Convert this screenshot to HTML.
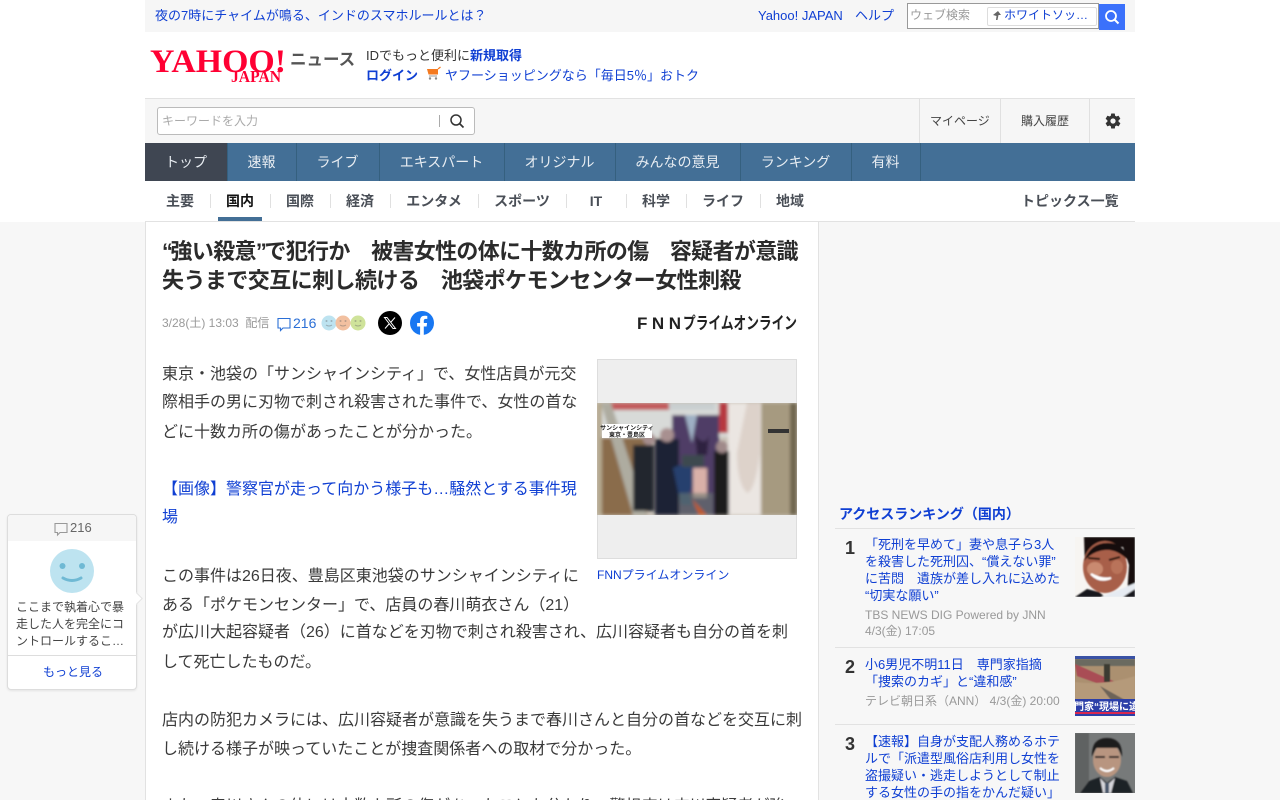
<!DOCTYPE html>
<html lang="ja"><head><meta charset="utf-8"><title>Yahoo!ニュース</title>
<style>
*{box-sizing:border-box}
html,body{margin:0;padding:0;width:1280px;height:800px;overflow:hidden;background:#fff}
body{font-family:"Liberation Sans","Noto Sans CJK JP",sans-serif;color:#333;position:relative}
.a{position:absolute;white-space:nowrap}
a,.l{color:#0f3fd3;text-decoration:none}
.hdr{left:145px;width:990px}
.nav{font-size:14px;color:#e8edf2;text-align:center;line-height:38px;top:143px;height:38px}
.ns{position:absolute;top:143px;width:1px;height:38px;background:#35607f}
.sub{font-size:14px;font-weight:bold;color:#4a4f57;top:192px;line-height:18px;text-align:center}
.sv{position:absolute;top:194px;width:1px;height:14px;background:#e0e0e0}
.p{font-size:16px;line-height:29px;color:#3a3a3a;left:162px}
.r{font-size:13px;line-height:17px;color:#0f3fd3;left:865px}
.m{font-size:12px;line-height:16px;color:#999;left:865px}
.hl{left:835px;width:300px;height:1px;background:#e2e2e2}
.t{left:162px;font-size:22px;line-height:32px;font-weight:bold;color:#2b2b2b;letter-spacing:-.56px}
.q{letter-spacing:-2.500px}
</style></head><body>
<div class="a" style="left:0;top:222px;width:1280px;height:578px;background:#f7f7f7"></div>
<div class="a hdr" style="top:0;height:32px;background:#f6f6f6"></div>
<div class="a l" style="left:155px;top:7px;font-size:13px;line-height:18px">夜の7時にチャイムが鳴る、インドのスマホルールとは？</div>
<div class="a l" style="left:758px;top:7px;font-size:13px;line-height:18px">Yahoo! JAPAN</div>
<div class="a l" style="left:855px;top:7px;font-size:13px;line-height:18px">ヘルプ</div>
<div class="a" style="left:907px;top:3px;width:192px;height:26px;background:#fff;border:1px solid #999"></div>
<div class="a" style="left:910px;top:7px;font-size:12px;line-height:17px;color:#999">ウェブ検索</div>
<div class="a" style="left:987px;top:7px;width:110px;height:19px;border:1px solid #ddd;border-radius:2px;background:#fff"></div>
<svg class="a" style="left:992px;top:10px" width="10" height="12" viewBox="0 0 10 12"><path d="M6 1L9 5H6.500L5.500 10H4L4.500 6L1 5z" fill="#666"/></svg>
<div class="a l" style="left:1004px;top:7px;font-size:12px;line-height:17px">ホワイトソッ…</div>
<div class="a" style="left:1099px;top:4px;width:26px;height:26px;background:#3b71fb"></div>
<svg class="a" style="left:1104px;top:9px" width="16" height="16" viewBox="0 0 16 16"><circle cx="7" cy="7" r="5" fill="none" stroke="#fff" stroke-width="1.800"/><path d="M10.500 10.500L14.500 14.500" stroke="#fff" stroke-width="2"/></svg>

<svg class="a" style="left:145px;top:40px" width="150" height="46" viewBox="0 0 150 46" font-family="'Liberation Serif',serif" font-weight="bold" fill="#ff0033"><text x="5" y="32" font-size="33" textLength="136" lengthAdjust="spacingAndGlyphs">YAHOO!</text><text x="86" y="42" font-size="17" textLength="50" lengthAdjust="spacingAndGlyphs">JAPAN</text></svg>
<div class="a" style="left:290px;top:48px;font-size:16.500px;line-height:24px;font-weight:bold;color:#555">ニュース</div>
<div class="a" style="left:366px;top:47px;font-size:13px;line-height:18px;color:#333">IDでもっと便利に<b class="l">新規取得</b></div>
<div class="a l" style="left:366px;top:67px;font-size:13px;line-height:18px;font-weight:bold">ログイン</div>
<svg class="a" style="left:426px;top:66px" width="16" height="15" viewBox="0 0 16 15"><path d="M1 3H12V8.500H2.500z" fill="#f47a20"/><path d="M12 3L14.500 1" stroke="#f47a20" stroke-width="1.200"/><path d="M3 10H11" stroke="#999"/><circle cx="4" cy="12.500" r="1.200" fill="#888"/><circle cx="10" cy="12.500" r="1.200" fill="#888"/></svg>
<div class="a l" style="left:445px;top:67px;font-size:13px;line-height:18px">ヤフーショッピングなら「毎日5％」おトク</div>

<div class="a hdr" style="top:98px;height:45px;background:#f6f6f6;border-top:1px solid #e2e2e2"></div>
<div class="a" style="left:157px;top:107px;width:318px;height:28px;background:#fff;border:1px solid #bbb;border-radius:3px"></div>
<div class="a" style="left:162px;top:112px;font-size:12px;line-height:18px;color:#aaa">キーワードを入力</div>
<div class="a" style="left:439px;top:115px;width:1px;height:12px;background:#aaa"></div>
<svg class="a" style="left:449px;top:113px" width="16" height="16" viewBox="0 0 16 16"><circle cx="7" cy="7" r="5" fill="none" stroke="#333" stroke-width="1.500"/><path d="M10.500 10.500L14.500 14.500" stroke="#333" stroke-width="1.700"/></svg>
<div class="a" style="left:919px;top:99px;width:1px;height:44px;background:#e0e0e0"></div>
<div class="a" style="left:1000px;top:99px;width:1px;height:44px;background:#e0e0e0"></div>
<div class="a" style="left:1089px;top:99px;width:1px;height:44px;background:#e0e0e0"></div>
<div class="a" style="left:930px;top:112px;font-size:12px;line-height:18px;color:#444">マイページ</div>
<div class="a" style="left:1021px;top:112px;font-size:12px;line-height:18px;color:#444">購入履歴</div>
<svg class="a" style="left:1104px;top:112px" width="18" height="18" viewBox="0 0 24 24"><path fill="#333" d="M19.400 13c.04-.33.06-.66.06-1s-.02-.67-.06-1l2.100-1.650c.2-.15.25-.42.120-.64l-2-3.460c-.12-.22-.38-.3-.6-.22l-2.490 1a7.300 7.300 0 0 0-1.730-1l-.38-2.650A.5.500 0 0 0 14 2h-4a.5.500 0 0 0-.5.420l-.38 2.650c-.63.26-1.200.6-1.730 1l-2.490-1a.5.500 0 0 0-.6.220l-2 3.460c-.13.22-.07.49.12.640L4.540 11c-.04.33-.06.67-.06 1s.02.67.06 1l-2.110 1.650c-.19.15-.25.42-.12.64l2 3.460c.12.22.38.3.6.22l2.490-1c.53.4 1.100.74 1.730 1l.38 2.650c.04.24.25.42.49.42h4c.25 0 .46-.18.49-.42l.38-2.650c.63-.26 1.200-.6 1.730-1l2.490 1c.23.08.49 0 .6-.22l2-3.460c.13-.22.07-.49-.12-.64zM12 15.500a3.500 3.500 0 1 1 0-7 3.500 3.500 0 0 1 0 7z"/></svg>

<div class="a hdr" style="top:143px;height:38px;background:#436f96"></div>
<div class="a nav" style="left:145px;width:82px;background:#3f4652">トップ</div>
<div class="a nav" style="left:227px;width:69px">速報</div>
<div class="a nav" style="left:296px;width:83px">ライブ</div>
<div class="a nav" style="left:379px;width:125px">エキスパート</div>
<div class="a nav" style="left:504px;width:111px">オリジナル</div>
<div class="a nav" style="left:615px;width:125px">みんなの意見</div>
<div class="a nav" style="left:740px;width:111px">ランキング</div>
<div class="a nav" style="left:851px;width:69px">有料</div>
<div class="ns" style="left:227px"></div><div class="ns" style="left:296px"></div><div class="ns" style="left:379px"></div><div class="ns" style="left:504px"></div><div class="ns" style="left:615px"></div><div class="ns" style="left:740px"></div><div class="ns" style="left:851px"></div><div class="ns" style="left:920px"></div>

<div class="a hdr" style="top:181px;height:41px;background:#fff;border-bottom:1px solid #e2e2e2"></div>
<div class="a sub" style="left:150px;width:60px">主要</div>
<div class="a sub" style="left:210px;width:60px;color:#111">国内</div>
<div class="a sub" style="left:270px;width:60px">国際</div>
<div class="a sub" style="left:330px;width:60px">経済</div>
<div class="a sub" style="left:390px;width:88px">エンタメ</div>
<div class="a sub" style="left:478px;width:88px">スポーツ</div>
<div class="a sub" style="left:566px;width:60px">IT</div>
<div class="a sub" style="left:626px;width:60px">科学</div>
<div class="a sub" style="left:686px;width:74px">ライフ</div>
<div class="a sub" style="left:760px;width:60px">地域</div>
<div class="a sub" style="left:1021px">トピックス一覧</div>
<div class="sv" style="left:210px"></div><div class="sv" style="left:270px"></div><div class="sv" style="left:330px"></div><div class="sv" style="left:390px"></div><div class="sv" style="left:478px"></div><div class="sv" style="left:566px"></div><div class="sv" style="left:626px"></div><div class="sv" style="left:686px"></div><div class="sv" style="left:760px"></div>
<div class="a" style="left:218px;top:217px;width:44px;height:4px;background:#436f96"></div>

<div class="a" style="left:145px;top:222px;width:674px;height:578px;background:#fff;border-left:1px solid #e2e2e2;border-right:1px solid #e2e2e2"></div>
<div class="a t" style="top:236px;letter-spacing:-.66px"><span class="q">“</span>強い殺意<span class="q">”</span>で犯行か　被害女性の体に十数カ所の傷　容疑者が意識</div>
<div class="a t" style="top:265px">失うまで交互に刺し続ける　池袋ポケモンセンター女性刺殺</div>
<div class="a" style="left:162px;top:314px;font-size:12px;line-height:18px;color:#999">3/28(土) 13:03&nbsp; 配信</div>
<svg class="a" style="left:277px;top:317px" width="14" height="15" viewBox="0 0 14 15"><path d="M1 1.500H13V11H6L3.500 13.500V11H1z" fill="none" stroke="#2b6fd6" stroke-width="1.100"/></svg>
<div class="a" style="left:293px;top:313px;font-size:14px;line-height:20px;color:#2b6fd6">216</div>
<svg class="a" style="left:320px;top:315px" width="46" height="16" viewBox="0 0 46 16"><circle cx="9" cy="8" r="7.500" fill="#bde3f0"/><circle cx="38" cy="8" r="7.500" fill="#cfe39a"/><circle cx="23" cy="8" r="7.500" fill="#f2c0a0"/><path d="M6 10Q9 12 12 10M20 10Q23 12 26 10M35 10Q38 12 41 10" stroke="#666" stroke-opacity=".45" fill="none"/><g fill="#666" fill-opacity=".4"><circle cx="6.500" cy="6" r="1"/><circle cx="11.500" cy="6" r="1"/><circle cx="20.500" cy="6" r="1"/><circle cx="25.500" cy="6" r="1"/><circle cx="35.500" cy="6" r="1"/><circle cx="40.500" cy="6" r="1"/></g></svg>
<div class="a" style="left:378px;top:311px;width:24px;height:24px;border-radius:50%;background:#000"></div>
<svg class="a" style="left:383px;top:316px" width="14" height="14" viewBox="0 0 14 14"><path d="M1.500 1.500H4L12.500 12.500H10zM12 1.500L8 6M6 8L2 12.500" fill="none" stroke="#fff" stroke-width="1"/></svg>
<svg class="a" style="left:410px;top:311px" width="24" height="24" viewBox="0 0 24 24"><circle cx="12" cy="12" r="12" fill="#1877f2"/><path fill="#fff" d="M16.600 15.500l.5-3.500h-3.300V9.800c0-1 .5-1.900 2-1.900h1.500v-3s-1.400-.2-2.700-.2c-2.700 0-4.500 1.600-4.500 4.600V12H7.100v3.500h3V24h3.700v-8.500z"/></svg>
<svg class="a" style="left:637px;top:312px" width="162" height="22" viewBox="0 0 162 22" font-weight="bold" fill="#222" font-family="'Liberation Sans','Noto Sans CJK JP',sans-serif"><text x="0" y="17" font-size="17" textLength="44" lengthAdjust="spacing">FNN</text><text x="46" y="17" font-size="17" textLength="114" lengthAdjust="spacingAndGlyphs">プライムオンライン</text></svg>

<div class="a p" style="top:360px">東京・池袋の「サンシャインシティ」で、女性店員が元交</div>
<div class="a p" style="top:388px">際相手の男に刃物で刺され殺害された事件で、女性の首な</div>
<div class="a p" style="top:418px">どに十数カ所の傷があったことが分かった。</div>
<div class="a p l" style="top:475px;color:#0f3fd3">【画像】警察官が走って向かう様子も…騒然とする事件現</div>
<div class="a p l" style="top:503px;color:#0f3fd3">場</div>
<div class="a p" style="top:562px">この事件は26日夜、豊島区東池袋のサンシャインシティに</div>
<div class="a p" style="top:591px">ある「ポケモンセンター」で、店員の春川萌衣さん（21）</div>
<div class="a p" style="top:618px">が広川大起容疑者（26）に首などを刃物で刺され殺害され、広川容疑者も自分の首を刺</div>
<div class="a p" style="top:648px">して死亡したものだ。</div>
<div class="a p" style="top:706px">店内の防犯カメラには、広川容疑者が意識を失うまで春川さんと自分の首などを交互に刺</div>
<div class="a p" style="top:735px">し続ける様子が映っていたことが捜査関係者への取材で分かった。</div>
<div class="a p" style="top:792px">また、春川さんの体には十数カ所の傷があったことも分かり、警視庁は広川容疑者が強</div>

<div class="a" style="left:597px;top:359px;width:200px;height:200px;background:#eee;border:1px solid #ddd"></div>
<svg class="a" style="left:597px;top:403px" width="200" height="112" viewBox="0 0 200 112" font-family="'Liberation Sans','Noto Sans CJK JP',sans-serif">
<defs><filter id="b" x="-5%" y="-5%" width="110%" height="110%"><feGaussianBlur stdDeviation="1.500"/></filter></defs>
<rect width="200" height="112" fill="#c9c2b8"/>
<g filter="url(#b)">
<rect x="0" y="0" width="131" height="34" fill="#d8dad8"/>
<rect x="10" y="0" width="62" height="7" fill="#c25a5c"/>
<rect x="72" y="0" width="46" height="7" fill="#c9cfd0"/>
<rect x="122" y="0" width="9" height="30" fill="#b7373f"/>
<rect x="75" y="12" width="47" height="100" fill="#4f3c66"/>
<path d="M88 12L95 40L100 12zM82 30L90 50" fill="#9fb0c4"/>
<path d="M98 32Q108 45 112 32L110 52H100z" fill="#2f2340"/>
<rect x="0" y="0" width="5" height="112" fill="#b5a98f"/>
<rect x="5" y="35" width="45" height="77" fill="#8a6c4c"/>
<path d="M4 0L14 0L50 112H36z" fill="#aeaca0"/>
<rect x="131" y="0" width="33" height="112" fill="#ebe6e2"/>
<path d="M150 0H163V50Q158 88 150 90Q140 80 140 50z" fill="#ddd2ca"/>
<rect x="164" y="0" width="29" height="112" fill="#a69a80"/>
<rect x="193" y="0" width="7" height="112" fill="#6f6650"/>
<rect x="36" y="42" width="21" height="66" fill="#22262f" />
<rect x="58" y="36" width="24" height="76" fill="#1c2036"/>
<rect x="117" y="48" width="15" height="64" fill="#1b1a1f"/>
<path d="M76 65L100 55L104 70L92 90L96 102H84z" fill="#27406e"/>
<rect x="85" y="52" width="22" height="12" fill="#3c4850"/>
<circle cx="70" cy="32" r="7" fill="#a89090"/><circle cx="52" cy="36" r="6" fill="#a58d8d"/><circle cx="125" cy="44" r="6" fill="#a08a8a"/>
<rect x="96" y="65" width="14" height="30" fill="#d9b0a8"/>
<rect x="82" y="90" width="34" height="22" fill="#6b7a70" opacity=".6"/>
<path d="M95 96L110 112H102z" fill="#c05a2c"/>
</g>
<rect x="5" y="21" width="50" height="14" fill="#fff"/>
<text x="30" y="27" font-size="6" font-weight="bold" fill="#222" text-anchor="middle">サンシャインシティ</text>
<text x="30" y="34" font-size="6" font-weight="bold" fill="#222" text-anchor="middle">東京・豊島区</text>
<rect x="171" y="26" width="21" height="4" fill="#333"/>
</svg>
<div class="a l" style="left:597px;top:566px;font-size:12px;line-height:18px">FNNプライムオンライン</div>

<div class="a" style="left:7px;top:514px;width:130px;height:176px;background:#fff;border:1px solid #ddd;border-radius:4px;box-shadow:0 1px 2px rgba(0,0,0,.08)"></div>
<div class="a" style="left:8px;top:515px;width:128px;height:26px;background:#f6f6f6;border-radius:4px 4px 0 0"></div>
<div class="a" style="left:132px;top:594px;width:9px;height:9px;background:#fff;transform:rotate(45deg);border-top:1px solid #e5e5e5;border-right:1px solid #e5e5e5"></div>
<svg class="a" style="left:54px;top:522px" width="14" height="15" viewBox="0 0 14 15"><path d="M1 1.500H13V10.500H6L3.500 13V10.500H1z" fill="none" stroke="#999" stroke-width="1.100"/></svg>
<div class="a" style="left:70px;top:519px;font-size:13px;line-height:18px;color:#666">216</div>
<svg class="a" style="left:50px;top:549px" width="44" height="44" viewBox="0 0 44 44"><circle cx="22" cy="22" r="22" fill="#bde3f0"/><circle cx="12.500" cy="17" r="3" fill="#6fb9d4"/><circle cx="32" cy="17" r="3" fill="#6fb9d4"/><path d="M13 29Q22 34 31 29" fill="none" stroke="#6fb9d4" stroke-width="3" stroke-linecap="round"/></svg>
<div class="a" style="left:16px;top:599px;font-size:12px;line-height:17px;color:#444">ここまで執着心で暴<br>走した人を完全にコ<br>ントロールするこ…</div>
<div class="a" style="left:8px;top:655px;width:128px;height:1px;background:#ddd"></div>
<div class="a l" style="left:43px;top:664px;font-size:12px;line-height:17px">もっと見る</div>

<div class="a l" style="left:839px;top:505px;font-size:14px;line-height:19px;font-weight:bold">アクセスランキング（国内）</div>
<div class="a hl" style="top:528px"></div>
<div class="a" style="left:845px;top:537px;font-size:18px;line-height:22px;font-weight:bold;color:#333">1</div>
<div class="a r" style="top:536px">「死刑を早めて」妻や息子ら3人<br>を殺害した死刑囚、“償えない罪”<br>に苦悶　遺族が差し入れに込めた<br>“切実な願い”</div>
<div class="a m" style="top:607px">TBS NEWS DIG Powered by JNN<br>4/3(金) 17:05</div>
<svg class="a" style="left:1075px;top:537px" width="60" height="60" viewBox="0 0 60 60"><defs><filter id="c"><feGaussianBlur stdDeviation=".7"/></filter></defs><rect width="60" height="60" fill="#f7f5f2"/><g filter="url(#c)"><path d="M9 0H60V60H52L54 28L48 10L20 10L10 32z" fill="#120d0c"/><ellipse cx="30" cy="30" rx="22" ry="26" fill="#a85f49"/><path d="M9 24Q16 4 36 6Q50 8 54 24Q42 12 30 13Q18 14 9 24z" fill="#120d0c"/><ellipse cx="20" cy="32" rx="8" ry="7" fill="#c98a70"/><ellipse cx="42" cy="30" rx="6" ry="7" fill="#b9735a"/><path d="M16 37Q25 46 36 41Q27 43 16 37z" fill="#fff" stroke="#fff" stroke-width="2"/><path d="M13 21L25 22M34 23L45 20" stroke="#2b1610" stroke-width="2"/><path d="M0 60L12 52L24 55L30 60z" fill="#16151a"/><path d="M26 60L46 52L60 46V60z" fill="#e6ebf2"/><path d="M48 60L60 52V60z" fill="#16151a"/></g></svg>
<div class="a hl" style="top:647px"></div>
<div class="a" style="left:845px;top:656px;font-size:18px;line-height:22px;font-weight:bold;color:#333">2</div>
<div class="a r" style="top:656px">小6男児不明11日　専門家指摘<br>「捜索のカギ」と“違和感”</div>
<div class="a m" style="top:693px">テレビ朝日系（ANN）&nbsp;4/3(金) 20:00</div>
<svg class="a" style="left:1075px;top:656px" width="60" height="60" viewBox="0 0 60 60" font-family="'Liberation Sans','Noto Sans CJK JP',sans-serif"><defs><filter id="d"><feGaussianBlur stdDeviation=".6"/></filter></defs><rect width="60" height="60" fill="#ab9070"/><g filter="url(#d)"><rect y="3" width="60" height="7" fill="#6b6a60"/><path d="M0 8L45 28L46 33L30 30L2 20z" fill="#a94d55"/><rect x="29" y="8" width="6" height="18" fill="#3a3a30"/><path d="M0 26Q30 30 60 20V44H0z" fill="#b59a7a"/><path d="M25 30L50 44H36z" fill="#6d6458"/></g><rect width="60" height="3" fill="#3a52a5"/><rect y="43" width="60" height="17" fill="#2c3fa8"/><rect y="56" width="60" height="2" fill="#d8274f"/><text x="-1" y="54" font-size="10" font-weight="bold" fill="#fff">門家“現場に違</text></svg>
<div class="a hl" style="top:724px"></div>
<div class="a" style="left:845px;top:733px;font-size:18px;line-height:22px;font-weight:bold;color:#333">3</div>
<div class="a r" style="top:733px">【速報】自身が支配人務めるホテ<br>ルで「派遣型風俗店利用し女性を<br>盗撮疑い・逃走しようとして制止<br>する女性の手の指をかんだ疑い」</div>
<svg class="a" style="left:1075px;top:733px" width="60" height="60" viewBox="0 0 60 60"><defs><filter id="e"><feGaussianBlur stdDeviation=".8"/></filter></defs><rect width="60" height="60" fill="#777a7a"/><g filter="url(#e)"><rect x="0" y="0" width="14" height="60" fill="#5f6262"/><ellipse cx="32" cy="27" rx="14" ry="17" fill="#b89580"/><path d="M17 24Q16 5 32 5Q48 5 47 24L43 15H21z" fill="#1d1b1d"/><path d="M20 24H30M34 24H44" stroke="#2a2625" stroke-width="2"/><path d="M25 35Q32 41 39 35" stroke="#fff" stroke-width="2" fill="none"/><path d="M5 60L14 48L25 44L32 50L40 44L52 48L58 60z" fill="#1e2025"/><path d="M25 45L32 52L40 45L36 60H28z" fill="#d5d5da"/><rect x="30" y="50" width="4" height="10" fill="#46566a"/></g></svg>
</body></html>
